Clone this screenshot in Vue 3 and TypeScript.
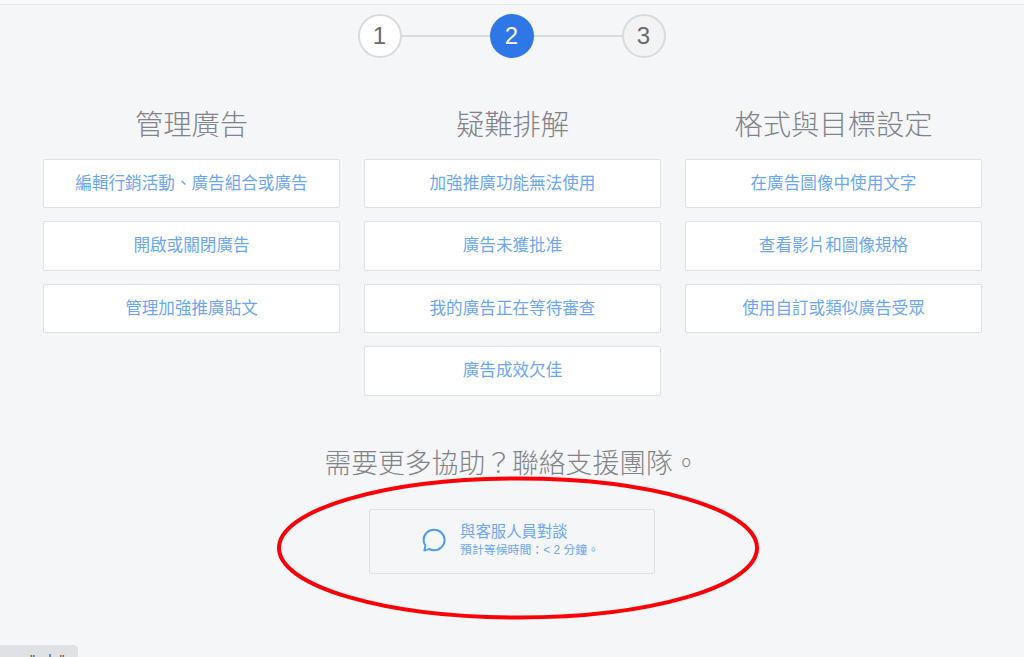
<script setup lang="ts">
const columns = [
  { title: '管理廣告', links: ['編輯行銷活動、廣告組合或廣告', '開啟或關閉廣告', '管理加強推廣貼文'] },
  { title: '疑難排解', links: ['加強推廣功能無法使用', '廣告未獲批准', '我的廣告正在等待審查', '廣告成效欠佳'] },
  { title: '格式與目標設定', links: ['在廣告圖像中使用文字', '查看影片和圖像規格', '使用自訂或類似廣告受眾'] },
]
</script>

<template>
  <div class="page">
    <div class="stepper">
      <div class="step done">1</div>
      <div class="line"></div>
      <div class="step active">2</div>
      <div class="line"></div>
      <div class="step todo">3</div>
    </div>
    <div class="columns">
      <section v-for="c in columns" :key="c.title" class="col">
        <h2>{{ c.title }}</h2>
        <a v-for="l in c.links" :key="l" class="card">{{ l }}</a>
      </section>
    </div>
    <h3>需要更多協助？聯絡支援團隊。</h3>
    <div class="chat">
      <svg class="icon" width="24" height="24" viewBox="0 0 24 24" fill="none">
        <path d="M2.4 22.4 L3.4 17.6 C2.3 16 1.6 14.1 1.6 12 C1.6 6.4 6.2 1.8 12 1.8 C17.8 1.8 22.6 6.4 22.6 12 C22.6 17.6 17.8 22.2 12 22.2 C10.2 22.2 8.5 21.8 7 21 C5.6 21.8 4 22.3 2.4 22.4 Z" stroke="#4f9cf5" stroke-width="2" stroke-linejoin="round" />
      </svg>
      <div class="chat-text">
        <div class="chat-title">與客服人員對談</div>
        <div class="chat-sub">預計等候時間：&lt; 2 分鐘。</div>
      </div>
    </div>
    <svg class="ring" width="486" height="146" viewBox="0 0 486 146" fill="none">
      <ellipse cx="243" cy="73" rx="239" ry="69.5" stroke="#fb0006" stroke-width="4" />
    </svg>
    <div class="tab">"ads"</div>
  </div>
</template>

<style scoped>
.page {
  position: relative;
  box-sizing: border-box;
  width: 1024px;
  height: 657px;
  overflow: hidden;
  background: #f5f6f8;
  font-family: "Liberation Sans", "Noto Sans CJK TC", sans-serif;
}
.page::before {
  content: "";
  display: block;
  height: 4px;
  background: #fafafb;
  border-bottom: 1px solid #e6e7ea;
}
.stepper {
  display: flex;
  align-items: center;
  justify-content: center;
  padding-top: 9px;
  padding-right: 1px;
}
.step {
  box-sizing: border-box;
  width: 44px;
  height: 44px;
  border-radius: 50%;
  display: flex;
  align-items: center;
  justify-content: center;
  font-size: 24px;
  color: #666a70;
}
.done { background: #fff; border: 2px solid #d9dbdf; }
.active { background: #2f77e6; color: #fff; }
.todo { background: #f3f3f4; border: 2px solid #d9dbdf; }
.line { width: 88px; height: 2px; background: #d9dbdf; }
.columns {
  display: flex;
  gap: 24px;
  padding: 0 43px;
  margin-top: 44px;
  height: 342px;
}
.col { width: 297px; flex: none; display: flex; flex-direction: column; }
h2 {
  margin: 0 0 14.8px;
  padding-top: 2px;
  height: 40px;
  font-size: 28.3px;
  line-height: 42px;
  font-weight: 300;
  text-align: center;
  color: #808388;
}
.card {
  box-sizing: border-box;
  height: 49.5px;
  margin-bottom: 13px;
  padding-bottom: 4px;
  background: #fff;
  border: 1px solid #dfe1e5;
  border-radius: 2px;
  display: flex;
  align-items: center;
  justify-content: center;
  font-size: 16.6px;
  color: #6ba6f4;
}
h3 {
  margin: 0;
  font-size: 26.8px;
  line-height: 40px;
  font-weight: 300;
  text-align: center;
  color: #808388;
}
.chat {
  box-sizing: border-box;
  width: 286px;
  height: 65px;
  margin: 25px auto 0 369px;
  border: 1px solid #dfe1e5;
  border-radius: 2px;
  background: #f5f6f8;
  display: flex;
  align-items: center;
  padding-left: 52px;
  gap: 14px;
}
.icon { margin-top: -3px; }
.chat-title { font-size: 15.4px; line-height: 18px; color: #6ba6f4; margin-top: -2px; }
.chat-sub { font-size: 11.9px; line-height: 18px; color: #6ba6f4; }
.ring { position: absolute; left: 275px; top: 475px; }
.tab {
  position: absolute;
  left: 0;
  top: 645px;
  width: 78px;
  height: 30px;
  background: #dfe1e5;
  border-radius: 0 5px 0 0;
  box-sizing: border-box;
  padding: 7px 0 0 30px;
  font-size: 14px;
  letter-spacing: 0.5px;
  color: #555;
}
</style>
